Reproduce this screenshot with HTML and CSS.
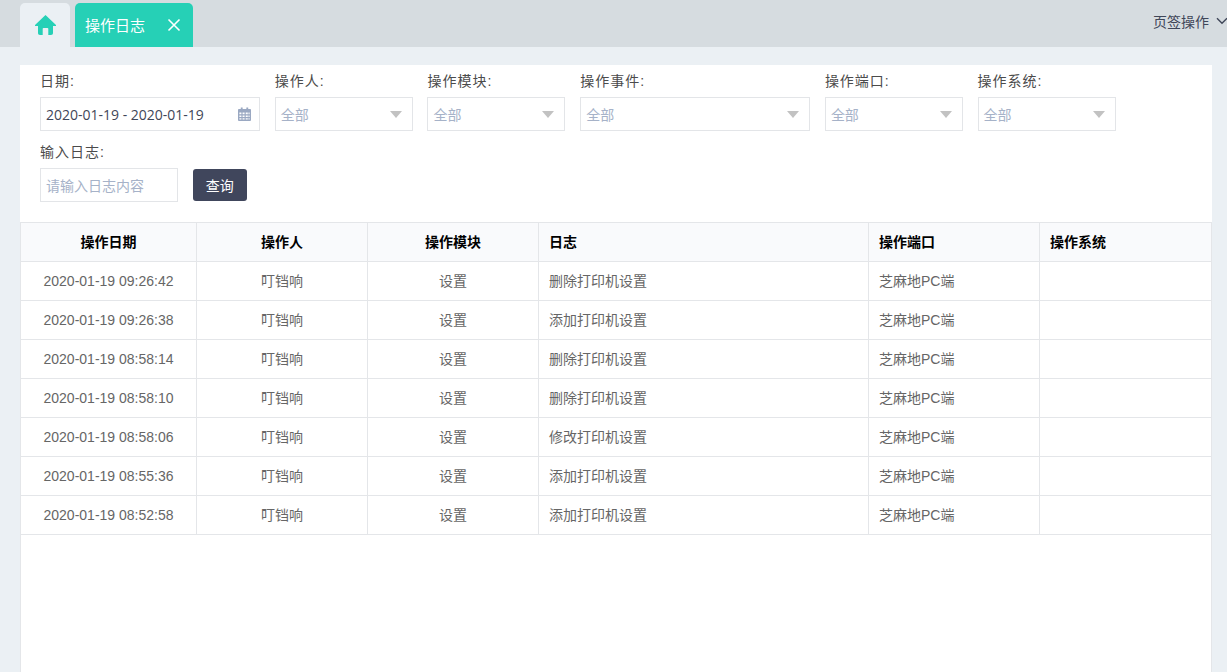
FILE: index.html
```html
<!DOCTYPE html>
<html>
<head>
  <meta charset="utf-8">
  <meta name="viewport" content="width=device-width, initial-scale=1">
  <title>操作日志</title>
  <link rel="stylesheet" href="styles.css">
</head>
<body>
  <div class="tabbar">
    <div class="tab tab-home">
      <svg width="21" height="20" viewBox="0 0 21 20"><path fill="#26d0b6" d="M10.500 0 0 10v1h3v7c0 1.300.7 2 2 2h2.700v-6.200c0-.5.300-.8.800-.8h4c.5 0 .8.300.8.800V20H16c1.300 0 2-.7 2-2v-7h3v-1z"/></svg>
    </div>
    <div class="tab tab-active">
      <span class="tab-title">操作日志</span>
      <svg width="14" height="14" viewBox="0 0 14 14"><path stroke="#fff" stroke-width="1.6" fill="none" d="M1.500 1.500 12.500 12.500M12.500 1.500 1.500 12.500"/></svg>
    </div>
    <div class="tab-ops">
      <span>页签操作</span>
      <svg width="12" height="8" viewBox="0 0 12 8"><path stroke="#3f4658" stroke-width="1.4" fill="none" d="M1 1.200 6 6.200 11 1.200"/></svg>
    </div>
  </div>

  <div class="panel">
    <div class="filters">
      <div class="filter-row">
        <div class="field">
          <label>日期:</label>
          <div class="input w-date">
            <span class="date-text">2020-01-19 - 2020-01-19</span>
            <svg width="13" height="14" viewBox="0 0 14 15"><path fill="#9aa8c2" fill-rule="evenodd" d="M1 2h2V.5h2V2h4V.5h2V2h2c.6 0 1 .4 1 1v11c0 .6-.4 1-1 1H1c-.6 0-1-.4-1-1V3c0-.6.4-1 1-1zm.5 4v1.700h2.200V6zm3.400 0v1.700h2.200V6zm3.400 0v1.700h2.200V6zm3 0v1.700h1.200V6zM1.500 9v1.700h2.200V9zm3.400 0v1.700h2.200V9zm3.400 0v1.700h2.200V9zm3 0v1.700h1.200V9zm-9.800 3v1.500h2.200V12zm3.400 0v1.500h2.200V12zm3.400 0v1.500h2.200V12zm3 0v1.500h1.200V12z"/></svg>
          </div>
        </div>
        <div class="field">
          <label>操作人:</label>
          <div class="input w-sm"><span class="holder">全部</span><i class="caret"></i></div>
        </div>
        <div class="field">
          <label>操作模块:</label>
          <div class="input w-sm"><span class="holder">全部</span><i class="caret"></i></div>
        </div>
        <div class="field">
          <label>操作事件:</label>
          <div class="input w-lg"><span class="holder">全部</span><i class="caret"></i></div>
        </div>
        <div class="field">
          <label>操作端口:</label>
          <div class="input w-sm"><span class="holder">全部</span><i class="caret"></i></div>
        </div>
        <div class="field">
          <label>操作系统:</label>
          <div class="input w-sm"><span class="holder">全部</span><i class="caret"></i></div>
        </div>
      </div>
      <div class="filter-row">
        <div class="field">
          <label>输入日志:</label>
          <div class="input w-sm"><span class="holder holder-log">请输入日志内容</span></div>
        </div>
        <button class="search-btn">查询</button>
      </div>
    </div>

    <div class="table-wrap">
      <table class="log-table">
        <colgroup>
          <col class="c-date"><col class="c-mid"><col class="c-mid"><col class="c-log"><col class="c-mid"><col>
        </colgroup>
        <thead>
          <tr>
            <th class="center">操作日期</th>
            <th class="center">操作人</th>
            <th class="center">操作模块</th>
            <th>日志</th>
            <th>操作端口</th>
            <th>操作系统</th>
          </tr>
        </thead>
        <tbody>
          <tr><td class="center time">2020-01-19 09:26:42</td><td class="center">叮铛响</td><td class="center">设置</td><td>删除打印机设置</td><td>芝麻地PC端</td><td></td></tr>
          <tr><td class="center time">2020-01-19 09:26:38</td><td class="center">叮铛响</td><td class="center">设置</td><td>添加打印机设置</td><td>芝麻地PC端</td><td></td></tr>
          <tr><td class="center time">2020-01-19 08:58:14</td><td class="center">叮铛响</td><td class="center">设置</td><td>删除打印机设置</td><td>芝麻地PC端</td><td></td></tr>
          <tr><td class="center time">2020-01-19 08:58:10</td><td class="center">叮铛响</td><td class="center">设置</td><td>删除打印机设置</td><td>芝麻地PC端</td><td></td></tr>
          <tr><td class="center time">2020-01-19 08:58:06</td><td class="center">叮铛响</td><td class="center">设置</td><td>修改打印机设置</td><td>芝麻地PC端</td><td></td></tr>
          <tr><td class="center time">2020-01-19 08:55:36</td><td class="center">叮铛响</td><td class="center">设置</td><td>添加打印机设置</td><td>芝麻地PC端</td><td></td></tr>
          <tr><td class="center time">2020-01-19 08:52:58</td><td class="center">叮铛响</td><td class="center">设置</td><td>添加打印机设置</td><td>芝麻地PC端</td><td></td></tr>
        </tbody>
      </table>
    </div>
  </div>
</body>
</html>
```

FILE: styles.css
```css
html, body {
  height: 100%;
  overflow: hidden;
}
body {
  margin: 0;
  background-color: #ebf0f4;
  font-family: "Liberation Sans", "Noto Sans CJK SC", sans-serif;
  font-size: 14px;
  color: #515a6e;
}
.tabbar {
  display: flex;
  align-items: flex-end;
  gap: 5px;
  height: 47px;
  padding-left: 20px;
  background-color: #d6dce0;
}
.tab {
  display: flex;
  align-items: center;
  height: 44px;
  border-radius: 5px 5px 0 0;
}
.tab-home {
  justify-content: center;
  width: 50px;
  background-color: #ebf0f4;
}
.tab-active {
  justify-content: space-between;
  width: 96px;
  padding: 0 12px 0 10px;
  background-color: #26d0b6;
  color: #fff;
  font-size: 15px;
}
.tab-title {
  margin-bottom: 2px;
}
.tab-ops {
  display: flex;
  align-items: center;
  gap: 7px;
  position: absolute;
  top: 11px;
  left: 1153px;
  white-space: nowrap;
  color: #3f4658;
}
.panel {
  display: flex;
  flex-direction: column;
  margin: 18px 15px 0 20px;
  height: 607px;
  background-color: #fff;
}
.filters {
  padding: 0 20px 20px;
}
.filter-row {
  display: flex;
  align-items: flex-end;
  gap: 14.72px;
  margin-bottom: 5px;
}
.filter-row:last-child {
  margin-bottom: 0;
}
.field label {
  display: block;
  height: 32px;
  line-height: 32px;
  letter-spacing: 1px;
  color: #4b4b4b;
}
.input {
  display: flex;
  align-items: center;
  justify-content: space-between;
  box-sizing: border-box;
  height: 34px;
  padding: 0 10px 0 5px;
  border: 1px solid #e3e5e8;
  background-color: #fff;
}
.w-sm {
  width: 138px;
}
.w-date {
  width: 220px;
  padding-right: 8px;
}
.w-lg {
  width: 230px;
}
.date-text {
  font-family: "Open Sans", "Noto Sans CJK SC", sans-serif;
  font-size: 14px;
  color: #3f4658;
}
.holder {
  color: #a6b2c8;
}
.holder-log {
  white-space: nowrap;
}
.caret {
  width: 0;
  height: 0;
  border-left: 6px solid transparent;
  border-right: 6px solid transparent;
  border-top: 7px solid #c2c2c2;
}
.search-btn {
  width: 54px;
  height: 32px;
  margin-bottom: 1px;
  padding: 0;
  border: none;
  border-radius: 3px;
  background-color: #40465c;
  color: #fff;
  font-family: inherit;
  font-size: 14px;
}
.table-wrap {
  flex: 1;
  border: 1px solid #e4e6e9;
  border-bottom: none;
}
.log-table {
  width: 100%;
  table-layout: fixed;
  border-collapse: collapse;
}
.c-date {
  width: 175.5px;
}
.c-mid {
  width: 171px;
}
.c-log {
  width: 330px;
}
.log-table th,
.log-table td {
  box-sizing: border-box;
  height: 39px;
  padding: 0 10px 2px;
  border: 1px solid #e4e6e9;
  text-align: left;
  color: #666;
  font-weight: normal;
}
.log-table tr:first-child th {
  border-top: none;
}
.log-table th:first-child,
.log-table td:first-child {
  border-left: none;
}
.log-table th:last-child,
.log-table td:last-child {
  border-right: none;
}
.log-table th {
  height: 38px;
  background-color: #f9fafc;
  color: #000;
  font-weight: bold;
}
.log-table td.time {
  padding-bottom: 0;
}
.log-table .center {
  text-align: center;
}
```
